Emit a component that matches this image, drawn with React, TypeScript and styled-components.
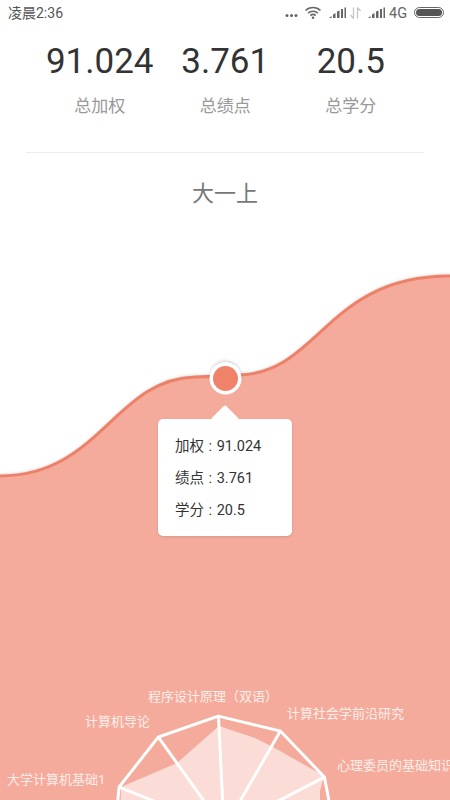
import React from "react";
import styled, { createGlobalStyle } from "styled-components";

const Global = createGlobalStyle`
  html, body { margin: 0; padding: 0; background: #fff; }
  body { font-family: Roboto, "Noto Sans CJK SC", sans-serif; }
`;

const Screen = styled.div`
  position: relative;
  width: 450px;
  height: 800px;
  overflow: hidden;
  background: #fff;
  display: flex;
  flex-direction: column;
`;

const StatusBar = styled.div`
  height: 26px;
  padding: 0 6px 0 8px;
  display: flex;
  align-items: center;
  justify-content: space-between;
  flex: none;
  color: #555;
  font-size: 14px;
  line-height: 26px;
`;

const Stats = styled.div`
  display: grid;
  grid-template-columns: repeat(3, 125.5px);
  padding: 14px 0 0 37px;
  flex: none;
`;

const Stat = styled.div`
  display: flex;
  flex-direction: column;
  align-items: center;
`;

const StatValue = styled.div`
  font-size: 35px;
  line-height: 44px;
  color: #333;
`;

const StatLabel = styled.div`
  margin-top: 10px;
  font-size: 17px;
  line-height: 24px;
  color: #999;
`;

const Divider = styled.div`
  height: 1px;
  margin: 34px 26px 0;
  background: #eee;
  flex: none;
`;

const Term = styled.div`
  margin-top: 24px;
  text-align: center;
  font-size: 22px;
  line-height: 34px;
  color: #777;
  flex: none;
`;

const Chart = styled.div`
  position: relative;
  flex: 1;
  margin-top: 20px;
`;

const ChartSvg = styled.svg`
  display: block;
  width: 450px;
  height: 570px;
`;

const RadarLabel = styled.text`
  font-size: 13px;
  fill: #fdeee9;
  font-family: Roboto, "Noto Sans CJK SC", sans-serif;
`;

const Tooltip = styled.div`
  position: absolute;
  left: 158px;
  top: 188px;
  width: 134px;
  height: 117px;
  box-sizing: border-box;
  padding: 12px 0 0 17px;
  background: #fff;
  border-radius: 5px;
  box-shadow: 0 1px 3px rgba(0, 0, 0, 0.12);
  &::before {
    content: "";
    position: absolute;
    left: 57px;
    top: -10px;
    width: 20px;
    height: 20px;
    background: #fff;
    transform: rotate(45deg);
    border-radius: 2px;
  }
`;

const TooltipRow = styled.div`
  position: relative;
  font-size: 14.5px;
  line-height: 32px;
  color: #333;
  word-spacing: 1px;
`;

const WAVE =
  "M0 475 C100 475 115 378 195 376 C210 375.600 225 375 240 374 C320 371 327 275 450 275";

const cx = 224;
const cy = 828;
const R = 113;
const vertices = Array.from({ length: 11 }, (_, i) => {
  const a = ((-2.8 + (360 / 11) * i) * Math.PI) / 180;
  return [cx + R * Math.sin(a), cy - R * Math.cos(a)] as const;
});

const SIGNAL = "M0 10.500l2.500-2v2zM4 10.500V7l2.500-1.500v5zM8 10.500V4l2.500-1v7.500zM12 10.500V1.500h2V10.500zM15.500 10.500V0h1.500v10.500z";

const StatusIcons = () => (
  <svg width="159" height="26" viewBox="0 0 159 26" fill="#666">
    <circle cx="2" cy="15.500" r="1.500" />
    <circle cx="6.500" cy="15.500" r="1.500" />
    <circle cx="11" cy="15.500" r="1.500" />
    <path
      d="M20.500 10.500a11 11 0 0 1 15 0M23 13.200a7.500 7.500 0 0 1 10 0M25.300 15.600a4 4 0 0 1 5.400 0"
      fill="none"
      stroke="#666"
      strokeWidth="1.500"
    />
    <circle cx="28" cy="17.800" r="1.300" />
    <path d={SIGNAL} transform="translate(44 7.500)" />
    <path d="M68.500 7.500v11M68.500 18.500l-3-3.500M72.500 7.500v11M72.500 7.500l3 3.500" stroke="#c4c4c4" strokeWidth="1.300" fill="none" />
    <path d={SIGNAL} transform="translate(83 7.500)" />
    <text x="104" y="18" fontSize="14.500" fontFamily="Roboto, sans-serif" fill="#666">4G</text>
    <rect x="129.500" y="7.500" width="29" height="10" rx="5" fill="none" stroke="#666" strokeWidth="1" />
    <rect x="131" y="9" width="26" height="7" rx="3.500" fill="#555" />
  </svg>
);

export default function App() {
  return (
    <Screen>
      <Global />
      <StatusBar>
        <span>凌晨2:36</span>
        <StatusIcons />
      </StatusBar>
      <Stats>
        <Stat>
          <StatValue>91.024</StatValue>
          <StatLabel>总加权</StatLabel>
        </Stat>
        <Stat>
          <StatValue>3.761</StatValue>
          <StatLabel>总绩点</StatLabel>
        </Stat>
        <Stat>
          <StatValue>20.5</StatValue>
          <StatLabel>总学分</StatLabel>
        </Stat>
      </Stats>
      <Divider />
      <Term>大一上</Term>
      <Chart>
        <ChartSvg viewBox="0 230 450 570">
          <defs>
            <filter id="waveShadow" x="-5%" y="-20%" width="110%" height="140%">
              <feDropShadow dx="0" dy="-2" stdDeviation="1.500" floodColor="#000" floodOpacity="0.15" />
            </filter>
          </defs>
          <path d={`${WAVE} L450 800 L0 800 Z`} fill="#f4ab9c" filter="url(#waveShadow)" />
          <path d={WAVE} fill="none" stroke="#ef8068" strokeWidth="3" />
          <circle cx="225.500" cy="377.500" r="16" fill="#fff" filter="url(#waveShadow)" />
          <circle cx="225.500" cy="377.500" r="12.500" fill="#f1826a" />

          <path
            d="M121 786 L177 762 L219 725 L255 737 L273 746 L324 775 L320 790 L320 830 L120 830 Z"
            fill="#fbdcd7"
          />
          <polygon points={vertices.map((v) => v.join(",")).join(" ")} fill="none" stroke="#fff" strokeWidth="3" />
          {vertices.map(([x, y], i) => (
            <line key={i} x1={cx} y1={cy} x2={x} y2={y} stroke="#fff" strokeWidth="3" />
          ))}

          <RadarLabel x="148" y="700">程序设计原理（双语）</RadarLabel>
          <RadarLabel x="85" y="725">计算机导论</RadarLabel>
          <RadarLabel x="7" y="783">大学计算机基础1</RadarLabel>
          <RadarLabel x="287" y="717">计算社会学前沿研究</RadarLabel>
          <RadarLabel x="337" y="769">心理委员的基础知识</RadarLabel>
        </ChartSvg>
        <Tooltip>
          <TooltipRow>加权 : 91.024</TooltipRow>
          <TooltipRow>绩点 : 3.761</TooltipRow>
          <TooltipRow>学分 : 20.5</TooltipRow>
        </Tooltip>
      </Chart>
    </Screen>
  );
}
